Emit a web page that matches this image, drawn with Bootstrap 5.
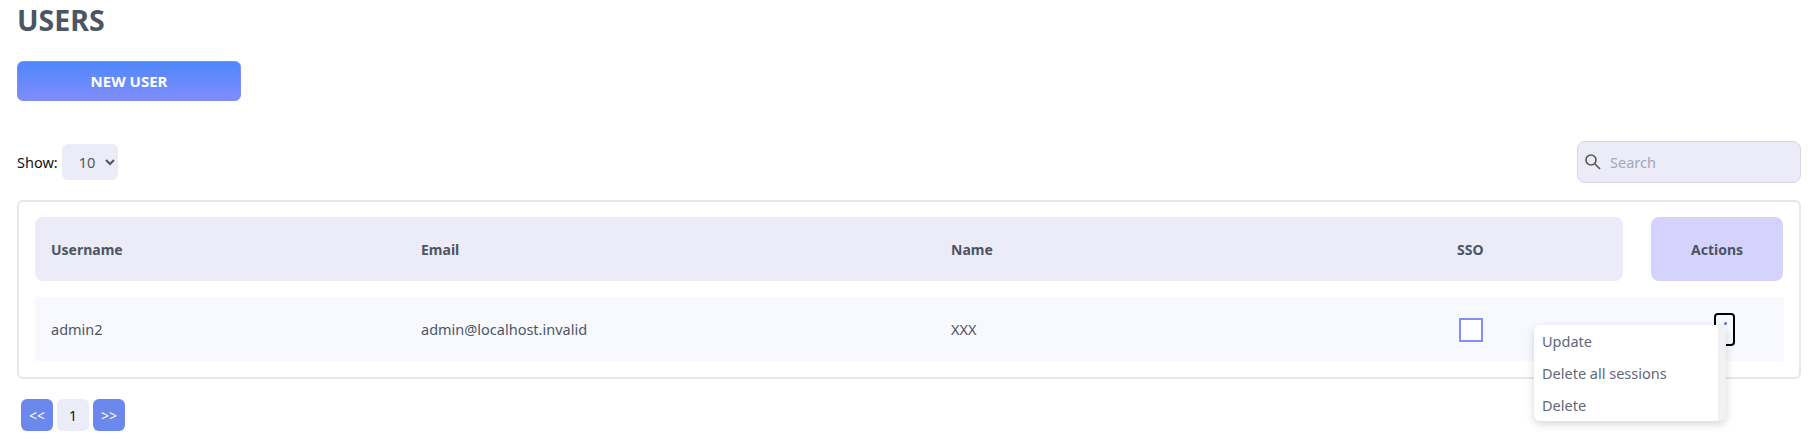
<!DOCTYPE html>
<html lang="en">
<head>
<meta charset="utf-8">
<title>Users</title>
<link href="https://cdn.jsdelivr.net/npm/bootstrap@5.3.0/dist/css/bootstrap.min.css" rel="stylesheet">
<style>
html,body{height:439px;overflow:hidden;background:#fff}
body{font-family:"Noto Sans","Open Sans",sans-serif;color:#4d5566;font-size:14.5px}
.shell{padding:0 13px 0 17px}
.page-title{font-size:28.5px;font-weight:700;line-height:40px;margin:0;color:#4b5563}
.new-btn{display:block;width:224px;height:40px;margin-top:21px;border-radius:6px;border:1px solid #7f8dfb;background:linear-gradient(180deg,#4f87fb,#7f8dfb);color:#fff;font-weight:700;font-size:15px}
.tools{margin-top:40px;height:42px}
.show-lbl{color:#111;margin-right:4px;padding-top:1px}
.size-sel{width:56px;height:36px;border:0;border-radius:6px;background-color:#ecebf8;color:#4d5566;padding:0 0 0 13px;font-size:14.5px}
.search-box{width:224px;height:42px;border:1px solid #d6d6e4;border-radius:8px;background:#ecebf8;padding-left:6px}
.search-box input{border:0;background:transparent;outline:0;width:170px;font-size:14.5px;color:#4d5566;margin-left:6px;padding-top:2px}
.search-box input::placeholder{color:#a4a7b5}
.tbl-card{margin-top:17px;height:179px;border:2px solid #e6e6ec;border-radius:6px;padding:15px 15px 0 16px}
.cell-row{height:64px}
.head-row{font-weight:700;color:#4b5563;background:#ecebf8;border-radius:8px;font-size:14px}
.data-row{margin-top:16px;background:#f8f9fe;padding-top:1px}
.c1{width:386px;padding-left:16px}.c2{width:530px}.c3{width:506px}.c4{width:166px}
.grow-main{width:1588px;flex:none}
.act-head{width:132px;margin-left:28px;flex:none;height:64px;background:#d5d3fd;border-radius:8px;font-weight:700;color:#4b5563;font-size:14px}
.sso-box{display:block;width:24px;height:24px;border:2px solid #7f90fa;background:#fff;margin-left:2px}
.act-cell{width:132px;margin-left:28px;flex:none}
.kebab{display:block;width:21px;height:33px;margin:-1px 48px 0 auto;padding:0;border:2px solid #000;border-radius:4px;background:transparent;position:relative}
.kebab i{position:absolute;left:8px;top:7px;width:3px;height:3px;border-radius:50%;background:#5a6fe0}
.row-menu{position:absolute;left:1534px;top:325px;width:192px;height:96px;background:#fff;border-radius:6px;box-shadow:0 3px 8px rgba(0,0,0,.16);padding-right:8px;overflow:hidden;z-index:5}
.row-menu::after{content:"";position:absolute;right:0;top:0;bottom:0;width:8px;background:#f1f1f4}
.row-menu a{display:block;height:32px;line-height:33px;padding-left:8px;color:#5f6878;text-decoration:none;font-size:14.5px}
.pager{margin:20px 0 0 4px;gap:4px}
.pg{width:32px;height:32px;border-radius:6px;font-size:14px;background:#6d88ec;color:#fff}
.pg.cur{background:#ecebf8;color:#111}
</style>
</head>
<body>
<div class="shell">
  <h1 class="page-title">USERS</h1>
  <button class="new-btn" type="button">NEW USER</button>
  <div class="tools d-flex justify-content-between align-items-center">
    <div class="d-flex align-items-center"><span class="show-lbl">Show:</span>
      <select class="size-sel"><option>10</option></select></div>
    <div class="search-box d-flex align-items-center">
      <svg width="18" height="18" viewBox="0 0 18 18" fill="none" stroke="#555" stroke-width="1.6"><circle cx="7" cy="7" r="5"/><path d="M10.8 10.8 16 16"/></svg>
      <input type="text" placeholder="Search">
    </div>
  </div>
  <div class="tbl-card">
    <div class="d-flex">
      <div class="grow-main cell-row head-row d-flex align-items-center">
        <div class="c1">Username</div><div class="c2">Email</div><div class="c3">Name</div><div class="c4">SSO</div>
      </div>
      <div class="act-head d-flex align-items-center justify-content-center">Actions</div>
    </div>
    <div class="d-flex data-row cell-row align-items-center">
      <div class="grow-main d-flex align-items-center">
        <div class="c1">admin2</div><div class="c2">admin@localhost.invalid</div><div class="c3">XXX</div><div class="c4"><span class="sso-box"></span></div>
      </div>
      <div class="act-cell"><button class="kebab" type="button" aria-label="Actions"><i></i></button></div>
    </div>
  </div>
  <div class="pager d-flex">
    <div class="pg d-flex align-items-center justify-content-center">&lt;&lt;</div>
    <div class="pg cur d-flex align-items-center justify-content-center">1</div>
    <div class="pg d-flex align-items-center justify-content-center">&gt;&gt;</div>
  </div>
</div>
<div class="row-menu"><a href="#">Update</a><a href="#">Delete all sessions</a><a href="#">Delete</a></div>
<script src="https://cdn.jsdelivr.net/npm/bootstrap@5.3.0/dist/js/bootstrap.bundle.min.js"></script>
</body>
</html>
